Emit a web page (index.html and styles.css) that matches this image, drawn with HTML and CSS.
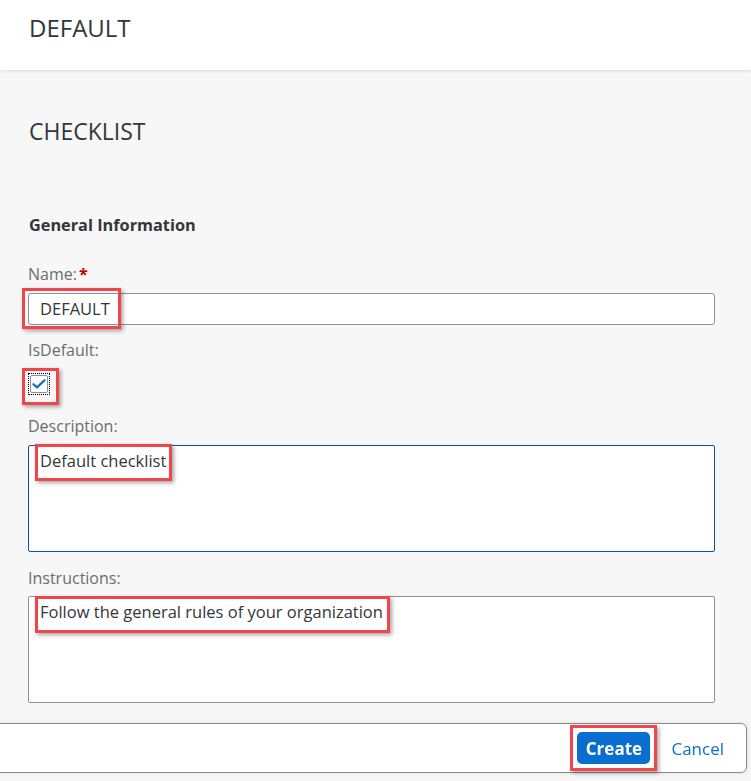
FILE: index.html
```html
<!DOCTYPE html>
<html lang="en">
<head>
<meta charset="utf-8">
<title>DEFAULT</title>
<link rel="stylesheet" href="styles.css">
</head>
<body>
<header class="page-header">
  <h1 class="page-title">DEFAULT</h1>
</header>
<main class="content">
  <h2 class="section-title">CHECKLIST</h2>
  <h3 class="group-title">General Information</h3>

  <div class="field field-name">
    <label class="label">Name:<span class="req">*</span></label>
    <div class="control input">
      <span class="value">DEFAULT</span>
      <span class="mark mark-name"></span>
    </div>
  </div>

  <div class="field field-default">
    <label class="label">IsDefault:</label>
    <div class="control checkbox">
      <span class="cb-box">
        <svg class="cb-check" width="14" height="10" viewBox="0 0 14 10"><path d="M1.5 5.2 L5 8.4 L12.5 1.2" fill="none" stroke="#0a6ed1" stroke-width="2.2" stroke-linecap="round" stroke-linejoin="round"/></svg>
      </span>
      <span class="mark mark-cb"></span>
    </div>
  </div>

  <div class="field field-desc">
    <label class="label">Description:</label>
    <div class="control textarea focused">
      <span class="value">Default checklist</span>
      <span class="mark mark-desc"></span>
    </div>
  </div>

  <div class="field field-instr">
    <label class="label">Instructions:</label>
    <div class="control textarea">
      <span class="value">Follow the general rules of your organization</span>
      <span class="mark mark-instr"></span>
    </div>
  </div>

  <h3 class="group-title group-hidden">System Information</h3>
</main>

<footer class="footer">
  <div class="btn-wrap">
    <button class="btn btn-primary">Create</button>
    <span class="mark mark-create"></span>
  </div>
  <button class="btn btn-link">Cancel</button>
</footer>
</body>
</html>
```

FILE: styles.css
```css
* { box-sizing: border-box; }

html, body {
  margin: 0;
  padding: 0;
}

body {
  background: #f7f7f7;
  font-family: "Open Sans", "Liberation Sans", sans-serif;
  color: #32363a;
  height: 900px;
}

.page-header {
  height: 70px;
  background: #ffffff;
  padding: 13px 0 0 29px;
  box-shadow: 0 1px 3px rgba(0, 0, 0, 0.12);
  position: relative;
}

.page-title {
  margin: 0;
  font-size: 24px;
  line-height: 30px;
  font-weight: 400;
  color: #32363a;
}

.content {
  padding: 0 36px 0 28px;
}

.section-title {
  margin: 46px 0 0 1px;
  font-size: 23px;
  line-height: 30px;
  font-weight: 400;
  color: #32363a;
}

.group-title {
  margin: 67px 0 0 1px;
  font-size: 16.3px;
  line-height: 24px;
  font-weight: 700;
  color: #32363a;
}

.group-hidden {
  margin-top: 48px;
}

.label {
  display: block;
  font-size: 16px;
  line-height: 24px;
  color: #6a6d70;
}

.req {
  color: #bb0000;
  margin-left: 2px;
  font-weight: 700;
}

.field-name { margin-top: 25px; }
.field-default { margin-top: 13px; }
.field-desc { margin-top: 19px; }
.field-instr { margin-top: 14px; }

.control {
  position: relative;
  margin-top: 7px;
}

.field-instr .control { margin-top: 6px; }
.field-default .control { margin-top: 11px; }

.input {
  height: 32px;
  background: #fff;
  border: 1px solid #89919a;
  border-radius: 3px;
  padding: 0 11px;
  display: flex;
  align-items: center;
}

.value {
  font-size: 16.5px;
  line-height: 24px;
  color: #32363a;
}

.textarea {
  height: 107px;
  background: #fff;
  border: 1px solid #89919a;
  border-radius: 2px;
  padding: 3px 11px;
}

.textarea.focused {
  border-color: #0854a0;
}

.checkbox {
  width: 22px;
  height: 22px;
  border: 1px dotted #000;
  padding: 1px;
}

.cb-box {
  display: flex;
  align-items: center;
  justify-content: center;
  width: 18px;
  height: 18px;
  background: #fff;
  border: 1px solid #89919a;
  border-radius: 2px;
}

.mark {
  position: absolute;
  border: 3px solid #f0454a;
  box-shadow: 2px 2px 4px rgba(0, 0, 0, 0.35);
  pointer-events: none;
}

.mark-name { left: -7px; top: -6px; width: 99px; height: 41px; }
.mark-cb { left: -7px; top: -6px; width: 37px; height: 37px; }
.mark-desc { left: 6px; top: -2px; width: 137px; height: 37px; }
.mark-instr { left: 6px; top: -1px; width: 355px; height: 37px; }
.mark-create { left: -7px; top: -7px; width: 87px; height: 46px; }

.footer {
  position: fixed;
  left: -1px;
  right: 4px;
  bottom: 8px;
  height: 50px;
  background: #fff;
  border: 1px solid #8a8a8a;
  border-radius: 0 6px 6px 0;
  box-shadow: 0 0 4px rgba(0, 0, 0, 0.12);
  display: flex;
  justify-content: flex-end;
  align-items: center;
  padding-right: 9px;
  gap: 8px;
}

.btn-wrap {
  position: relative;
}

.btn {
  font-family: "Open Sans", "Liberation Sans", sans-serif;
  font-size: 17px;
  border: none;
  cursor: pointer;
}

.btn-primary {
  display: block;
  width: 73px;
  height: 32px;
  background: #0a6ed1;
  color: #fff;
  font-weight: 700;
  border-radius: 5px;
  padding: 0;
}

.btn-link {
  background: transparent;
  color: #0a6ed1;
  padding: 0 13px;
  height: 32px;
}
```
